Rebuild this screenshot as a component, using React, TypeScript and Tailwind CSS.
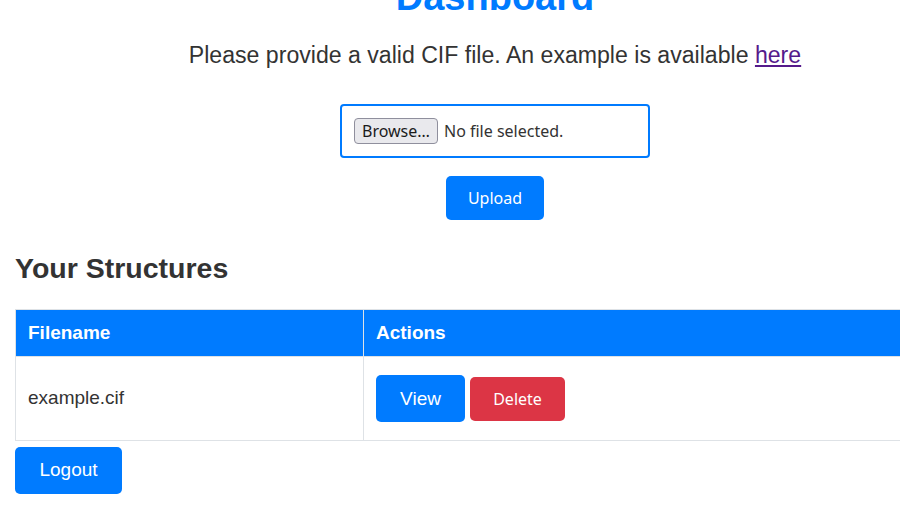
import React from "react";

export default function App() {
  return (
    <div className="w-[900px] h-[518px] overflow-hidden bg-white text-[#333] font-['Liberation_Sans',Arial,sans-serif]">
      <div className="w-[990px] px-[15px]">
        <div className="text-center">
          <h1 className="mt-[-26px] text-[38px] leading-[46px] font-bold text-[#007bff]">Dashboard</h1>
          <p className="mt-[18px] text-[23.1px] leading-[34px]">
            Please provide a valid CIF file. An example is available{" "}
            <a href="#" className="text-[#551a8b] underline">here</a>
          </p>
          <div className="mt-[32px] flex justify-center">
            <div className="w-[310px] h-[54px] border-2 border-[#007bff] rounded-[4px] flex items-center pl-[12px] font-['Noto_Sans',sans-serif] text-[16px] text-[#333]">
              <span className="h-[26px] px-[7px] flex items-center border border-[#8f8f9d] bg-[#e9e9ed] rounded-[4px] text-[#1b1b1b]">Browse…</span>
              <span className="ml-[6px]">No file selected.</span>
            </div>
          </div>
          <div className="mt-[18px] flex justify-center">
            <button className="w-[98px] h-[44px] rounded-[5px] bg-[#007bff] text-white font-['Noto_Sans',sans-serif] text-[16px]">Upload</button>
          </div>
        </div>
        <h2 className="mt-[31px] text-[28.5px] leading-[34px] font-bold">Your Structures</h2>
        <table className="mt-[24px] w-[960px] border-collapse text-[19px]">
          <thead>
            <tr className="bg-[#007bff] text-white">
              <th className="w-[348px] text-left font-bold px-[12px] py-[12px] leading-[22px] border border-[#dee2e6]">Filename</th>
              <th className="text-left font-bold px-[12px] py-[12px] leading-[22px] border border-[#dee2e6]">Actions</th>
            </tr>
          </thead>
          <tbody>
            <tr>
              <td className="px-[12px] h-[84px] border border-[#dee2e6] align-middle">example.cif</td>
              <td className="px-[12px] h-[84px] border border-[#dee2e6] align-middle">
                <div className="flex items-center gap-[5px]">
                  <button className="w-[89px] h-[47px] rounded-[5px] bg-[#007bff] text-white text-[19px] leading-[47px]">View</button>
                  <button className="w-[95px] h-[44px] rounded-[5px] bg-[#dc3545] text-white font-['Noto_Sans',sans-serif] text-[16px]">Delete</button>
                </div>
              </td>
            </tr>
          </tbody>
        </table>
        <button className="mt-[6px] w-[107px] h-[47px] rounded-[5px] bg-[#007bff] text-white text-[19px]">Logout</button>
      </div>
    </div>
  );
}
